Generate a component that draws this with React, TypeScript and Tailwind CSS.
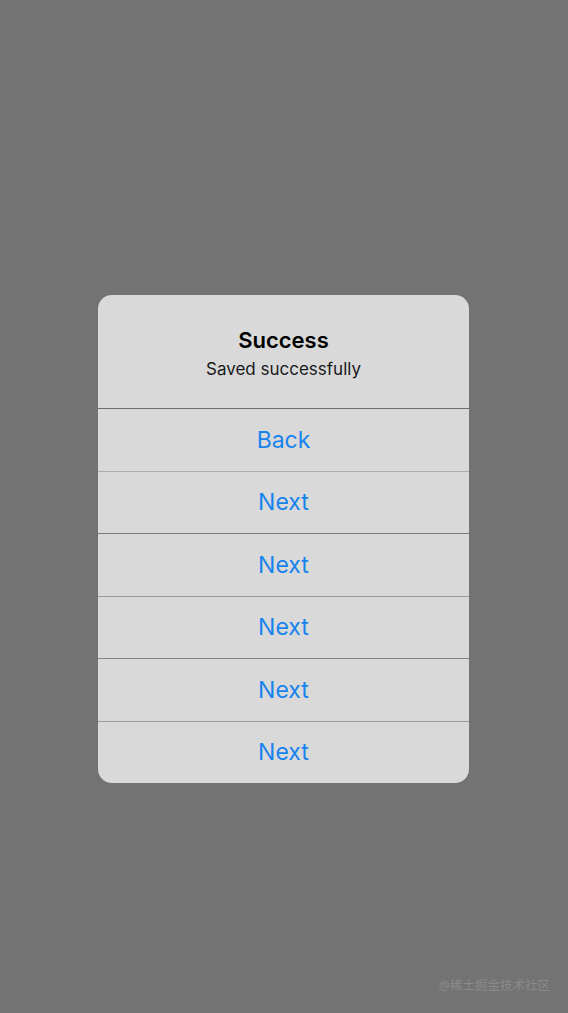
import React from "react";

const rows = [
  { label: "Back", line: "border-[#6e6e6e]" },
  { label: "Next", line: "border-[#acacac]" },
  { label: "Next", line: "border-[#7a7a7a]" },
  { label: "Next", line: "border-[#9a9a9a]" },
  { label: "Next", line: "border-[#858585]" },
  { label: "Next", line: "border-[#9a9a9a]" },
];

export default function App() {
  return (
    <div
      className="relative w-[568px] h-[1013px] bg-[#737373] flex flex-col pt-[295px] pl-[98px]"
      style={{ fontFamily: "Inter, 'Noto Sans', 'Liberation Sans', sans-serif" }}
    >
      <div className="w-[371px] rounded-[14px] bg-[#d9d9d9] overflow-hidden flex flex-col">
        <div className="flex flex-col items-center pt-[31px] pb-[28px]">
          <div className="text-[22px] leading-[28px] font-semibold text-black">Success</div>
          <div className="mt-[4px] text-[17px] leading-[22px] text-[#1a1a1a]">Saved successfully</div>
        </div>
        {rows.map((r, i) => (
          <div
            key={i}
            className={`h-[62.5px] box-border border-t ${r.line} flex items-center justify-center text-[23px] text-[#1783ee]`}
          >
            {r.label}
          </div>
        ))}
      </div>
      <div
        className="absolute right-[18px] bottom-[19px] text-[12.5px] leading-[16px] text-[#8a8a8a]"
        style={{ fontFamily: "'Noto Sans', 'Noto Sans CJK SC', sans-serif" }}
      >
        @稀土掘金技术社区
      </div>
    </div>
  );
}
